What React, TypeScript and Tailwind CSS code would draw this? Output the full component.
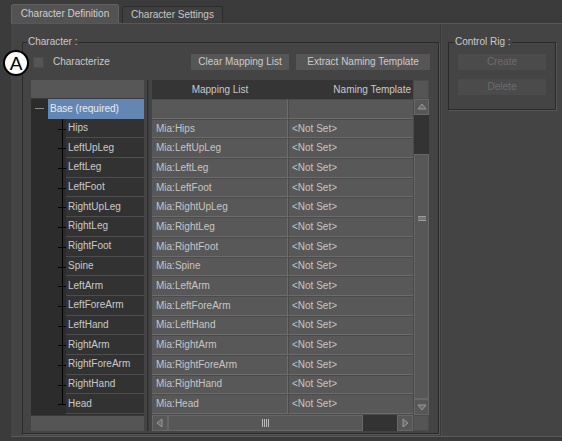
import React from 'react'

const bones = [
  'Hips', 'LeftUpLeg', 'LeftLeg', 'LeftFoot', 'RightUpLeg', 'RightLeg', 'RightFoot', 'Spine',
  'LeftArm', 'LeftForeArm', 'LeftHand', 'RightArm', 'RightForeArm', 'RightHand', 'Head',
]

function TreeRow({ name, last }: { name: string; last: boolean }) {
  return (
    <div className="flex h-[19.7px]">
      <svg width="35" height="20" className="shrink-0" viewBox="0 0 35 20">
        <line x1="31.5" y1="0" x2="31.5" y2={last ? 10.5 : 20} stroke="#000" strokeWidth="1" />
        <line x1="27" y1="10.5" x2="35" y2="10.5" stroke="#000" strokeWidth="1" />
      </svg>
      <div className="flex-1 flex items-center pl-[2px] bg-[#323232] border-b border-[#4d4d4d] text-[#cacaca]">
        {name}
      </div>
    </div>
  )
}

function TableRow({ left, right }: { left: string; right: string }) {
  return (
    <div className="flex h-[19.7px]">
      <div className="w-[136px] flex items-center pl-[4px] bg-[#585858] border-t border-[#4b4b4b] border-b border-b-[#6c6c6c] border-r border-r-[#6c6c6c] text-[#c6c6c6]">
        {left}
      </div>
      <div className="flex-1 flex items-center pl-[3px] bg-[#585858] border-t border-[#4b4b4b] border-l border-l-[#4b4b4b] border-b border-b-[#6c6c6c] text-[#c6c6c6]">
        {right}
      </div>
    </div>
  )
}

function Arrow({ dir }: { dir: 'up' | 'down' | 'left' | 'right' }) {
  const pts = {
    up: '2,8 6,3 10,8',
    down: '2,4 6,9 10,4',
    left: '8,2 3,6 8,10',
    right: '4,2 9,6 4,10',
  }[dir]
  return (
    <svg width="12" height="12" viewBox="0 0 12 12">
      <polygon points={pts} fill="#6a6a6a" stroke="#9a9a9a" strokeWidth="1" />
    </svg>
  )
}

function Btn({ children, w, disabled }: { children: React.ReactNode; w: string; disabled?: boolean }) {
  return (
    <div
      className={`${w} h-[16px] flex items-center justify-center ${
        disabled ? 'bg-[#4b4b4b] text-[#6c6c6c]' : 'bg-[#565656] text-[#cccccc]'
      }`}
    >
      {children}
    </div>
  )
}

export default function App() {
  return (
    <div className="w-[562px] h-[441px] bg-[#3b3b3b] overflow-hidden relative font-['Liberation_Sans',sans-serif] text-[10px] leading-[12px]">
      {/* tabs */}
      <div className="flex items-end h-[23px] pl-[11px] gap-[3px]">
        <div className="h-[19px] w-[108px] bg-[#535353] rounded-t-[3px] border border-b-0 border-[#626262] text-[#cfcfcf] flex items-center justify-center">
          Character Definition
        </div>
        <div className="h-[17px] w-[101px] bg-[#3f3f3f] rounded-t-[2px] border border-b-0 border-[#2c2c2c] text-[#c8c8c8] flex items-center justify-center">
          Character Settings
        </div>
      </div>

      {/* main panel */}
      <div className="ml-[11px] h-[414px] bg-[#444444] border-t border-[#585858] border-b border-b-[#5a5a5a] flex pt-[12px]">
        {/* Character group */}
        <fieldset className="ml-[11px] w-[417px] h-[398px] border border-[#2a2a2a] shadow-[1px_1px_0_#575757] px-[8px] text-[#cacaca]">
          <legend className="-ml-[4px] px-[1px] text-[#cacaca]">Character :</legend>
          <div className="flex items-center h-[16px] mt-[6px]">
            <div className="w-[11px] h-[11px] ml-[2px] bg-[#555] border border-[#4a4a4a]" />
            <span className="ml-[9px] text-[#cacaca]">Characterize</span>
            <div className="ml-auto flex gap-[7px]">
              <Btn w="w-[98px]">Clear Mapping List</Btn>
              <Btn w="w-[134px]">Extract Naming Template</Btn>
            </div>
          </div>

          <div className="flex mt-[10px] h-[351px]">
            {/* tree */}
            <div className="w-[113px] flex flex-col bg-[#2c2c2c]">
              <div className="h-[19px] bg-[#575757] border-b border-[#3a3a3a]" />
              <div className="flex h-[19.7px] items-center">
                <div className="w-[17px] flex items-center justify-center">
                  <div className="w-[9px] h-[1px] bg-[#8a8a8a]" />
                </div>
                <div className="flex-1 h-full flex items-center pl-[2px] bg-[#6387b4] text-[#ececec]">Base (required)</div>
              </div>
              {bones.map((b, i) => (
                <TreeRow key={b} name={b} last={i === bones.length - 1} />
              ))}
              <div className="flex-1" />
              <div className="h-[16px] bg-[#555555] border-t border-[#3a3a3a]" />
            </div>

            {/* splitter */}
            <div className="w-[8px] flex justify-center">
              <div className="w-[2px] h-full bg-[#2e2e2e] border-r border-[#3a3a3a]" />
            </div>

            {/* table */}
            <div className="w-[277px] flex flex-col bg-[#4a4a4a]">
              <div className="flex h-[19px]">
                <div className="w-[136px] bg-[#353535] flex items-center justify-center text-[#cacaca]">Mapping List</div>
                <div className="w-[125px] bg-[#353535] flex items-center justify-end pr-[2px] text-[#cacaca]">Naming Template</div>
                <div className="w-[16px] bg-[#555] border border-[#4b4b4b]" />
              </div>
              <div className="flex flex-1 min-h-0">
                <div className="w-[261px] flex flex-col overflow-hidden">
                  <TableRow left="" right="" />
                  {bones.map((b) => (
                    <TableRow key={b} left={`Mia:${b}`} right="<Not Set>" />
                  ))}
                </div>
                {/* vertical scrollbar */}
                <div className="w-[16px] flex flex-col bg-[#333] border-l border-[#4a4a4a]">
                  <div className="h-[16px] bg-[#575757] border border-[#676767] flex items-center justify-center">
                    <Arrow dir="up" />
                  </div>
                  <div className="h-[39px] bg-[#333]" />
                  <div className="flex-1 bg-[#575757] border border-[#676767] flex items-center justify-center pb-[117px]">
                    <div className="w-[8px] h-[5px] border-y border-[#9a9a9a] bg-[#777]" />
                  </div>
                  <div className="h-[16px] bg-[#575757] border border-[#676767] flex items-center justify-center">
                    <Arrow dir="down" />
                  </div>
                </div>
              </div>
              {/* horizontal scrollbar */}
              <div className="flex h-[16px]">
                <div className="w-[16px] bg-[#575757] border border-[#676767] flex items-center justify-center">
                  <Arrow dir="left" />
                </div>
                <div className="w-[195px] bg-[#575757] border border-[#676767] flex items-center justify-center">
                  <div className="flex gap-[1px]">
                    <div className="w-[1px] h-[8px] bg-[#bbb]" />
                    <div className="w-[1px] h-[8px] bg-[#bbb]" />
                    <div className="w-[1px] h-[8px] bg-[#bbb]" />
                    <div className="w-[1px] h-[8px] bg-[#bbb]" />
                  </div>
                </div>
                <div className="w-[34px] bg-[#333]" />
                <div className="w-[16px] bg-[#575757] border border-[#676767] flex items-center justify-center">
                  <Arrow dir="right" />
                </div>
                <div className="w-[16px] bg-[#555] border border-[#4b4b4b]" />
              </div>
            </div>
          </div>
        </fieldset>

        {/* splitter line */}
        <div className="ml-[1px] -mt-[12px] w-[2px] bg-[#383838] border-r border-[#4e4e4e]" />

        {/* Control Rig group */}
        <fieldset className="ml-[6px] w-[108px] h-[74px] border border-[#2a2a2a] shadow-[1px_1px_0_#575757] px-[9px]">
          <legend className="-ml-[4px] px-[1px] text-[#cacaca]">Control Rig :</legend>
          <div className="flex flex-col gap-[9px] mt-[6px]">
            <Btn w="w-[88px]" disabled>Create</Btn>
            <Btn w="w-[88px]" disabled>Delete</Btn>
          </div>
        </fieldset>
      </div>

      {/* annotation callout */}
      <div className="absolute left-[3px] top-[50px] w-[26px] h-[26px] rounded-full bg-white border-2 border-black flex items-center justify-center text-black text-[19px] leading-none">
        A
      </div>
    </div>
  )
}
